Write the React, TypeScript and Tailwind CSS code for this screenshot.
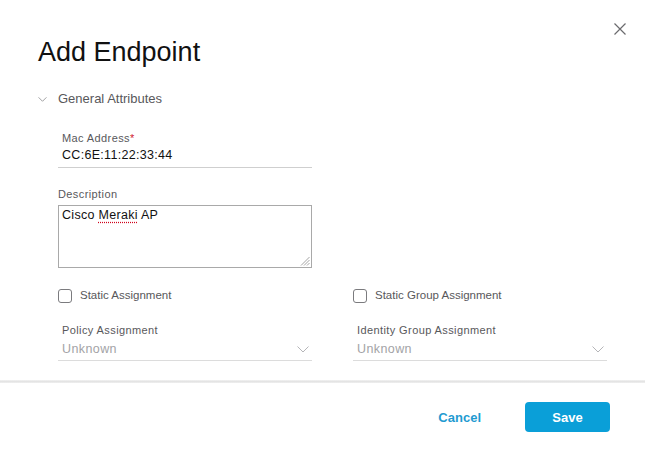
import type { ReactNode } from 'react';

function Chevron({ className }: { className?: string }) {
  return (
    <svg viewBox="0 0 12 7" className={className} fill="none" stroke="currentColor" strokeWidth="1">
      <path d="M0.5 0.5 L6 6 L11.5 0.5" />
    </svg>
  );
}

function Checkbox({ label }: { label: string }) {
  return (
    <label className="flex items-center gap-[8px]">
      <span className="w-[14px] h-[14px] rounded-[3px] border border-[#7b7b7e] bg-white" />
      <span className="text-[11.5px] text-[#58585b]">{label}</span>
    </label>
  );
}

function Select({ label }: { label: string }) {
  return (
    <div className="flex flex-col">
      <span className="pl-[4px] h-[14px] leading-[14px] text-[11px] tracking-[0.4px] text-[#58585b]">{label}</span>
      <div className="mt-[3px] h-[21px] flex items-start justify-between pl-[4px] pr-[3px] border-b border-[#dcdcdc]">
        <span className="leading-[18px] text-[12.5px] tracking-[0.4px] text-[#a3a3a6]">Unknown</span>
        <Chevron className="w-[12px] h-[7px] mt-[6px] text-[#b5b5b8]" />
      </div>
    </div>
  );
}

function Field({ children }: { children: ReactNode }) {
  return <div className="w-[254px]">{children}</div>;
}

export default function App() {
  return (
    <div
      className="w-[645px] h-[451px] bg-white flex flex-col overflow-hidden"
      style={{ fontFamily: '"Liberation Sans", Arial, sans-serif' }}
    >
      <div className="flex justify-between pl-[38px] pr-[19px] pt-[23px]">
        <h1 className="mt-[13px] h-[32px] leading-[32px] text-[27px] text-[#111]">Add Endpoint</h1>
        <button className="w-[12px] h-[12px] text-[#6b6b6e]">
          <svg viewBox="0 0 12 12" className="w-[12px] h-[12px]" fill="none" stroke="currentColor" strokeWidth="1.2">
            <path d="M0.5 0.5 L11.5 11.5 M11.5 0.5 L0.5 11.5" />
          </svg>
        </button>
      </div>

      <div className="pl-[38px] mt-[22px] flex items-center h-[18px]">
        <Chevron className="w-[9px] h-[5px] text-[#7b7b7e]" />
        <span className="ml-[11px] text-[13px] text-[#58585b]">General Attributes</span>
      </div>

      <div className="pl-[58px] mt-[23px] flex flex-col">
        <Field>
          <div className="pl-[4px] h-[14px] leading-[14px] text-[11px] tracking-[0.4px] text-[#58585b]">
            Mac Address<span className="text-[#cf2030]">*</span>
          </div>
          <div className="mt-[1px] h-[22px] pl-[4px] border-b border-[#cfcfcf] text-[12.5px] leading-[18px] tracking-[0.3px] text-[#111]">
            CC:6E:11:22:33:44
          </div>
        </Field>

        <Field>
          <div className="mt-[19px] h-[14px] leading-[14px] text-[11px] tracking-[0.4px] text-[#58585b]">Description</div>
          <div className="relative mt-[4px] h-[63px] border border-[#a9a9a9] px-[3px] pt-[1px] text-[12.5px] leading-[16px] tracking-[0.3px] text-[#111]">
            Cisco{' '}
            <span className="underline decoration-dotted decoration-[#d0021b] underline-offset-[3px]">Meraki</span>{' '}
            AP
            <svg viewBox="0 0 10 10" className="absolute right-[1px] bottom-[1px] w-[10px] h-[10px]" stroke="#9a9a9a" strokeWidth="0.9">
              <path d="M9.5 1 L1 9.5 M9.5 4 L4 9.5 M9.5 7 L7 9.5" />
            </svg>
          </div>
        </Field>

        <div className="mt-[19px] flex gap-[41px]">
          <Field>
            <Checkbox label="Static Assignment" />
          </Field>
          <Field>
            <Checkbox label="Static Group Assignment" />
          </Field>
        </div>

        <div className="mt-[19px] flex gap-[41px]">
          <Field>
            <Select label="Policy Assignment" />
          </Field>
          <Field>
            <Select label="Identity Group Assignment" />
          </Field>
        </div>
      </div>

      <div className="mt-[19px] h-[3px] bg-gradient-to-b from-[#f2f2f2] via-[#e4e4e4] to-[#efefef]" />

      <div className="flex justify-end items-center gap-[44px] pr-[35px] pt-[19px]">
        <button className="text-[13px] font-bold text-[#1f9bd1]">Cancel</button>
        <button className="w-[85px] h-[30px] rounded-[4px] bg-[#0a9fd8] text-white text-[13px] font-bold">Save</button>
      </div>
    </div>
  );
}
